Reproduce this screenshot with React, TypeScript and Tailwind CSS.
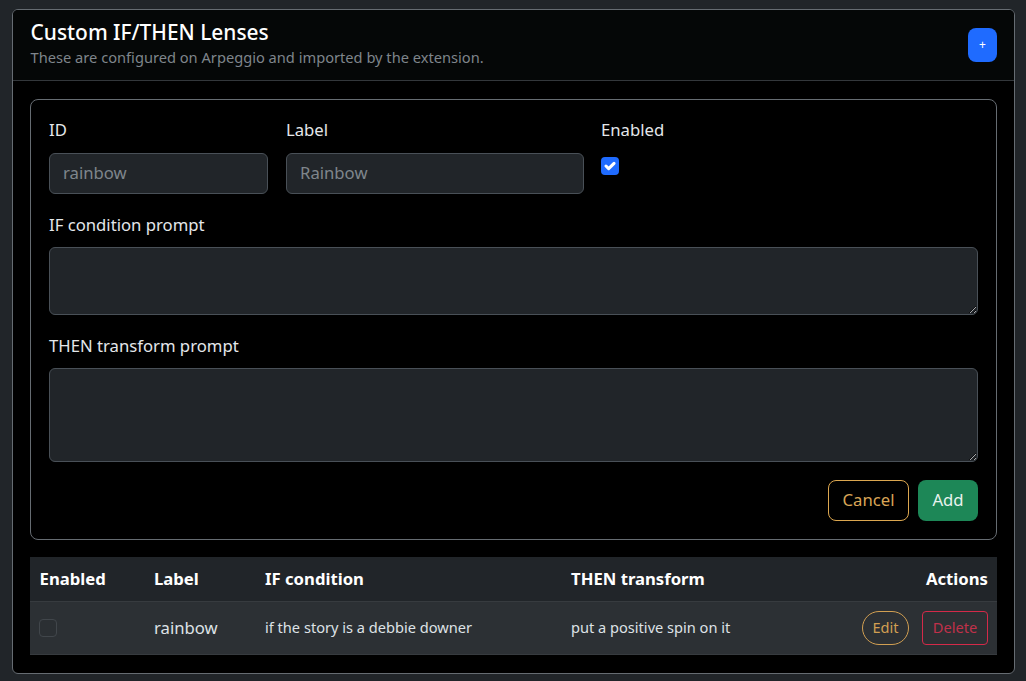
const font = "font-['Noto_Sans',sans-serif]";

function Field({ label, className, children }: { label: string; className?: string; children: React.ReactNode }) {
  return (
    <div className={className}>
      <label className="block text-[16.7px] leading-[24px] mb-[10px] text-[#e4e7ea]">{label}</label>
      {children}
    </div>
  );
}

function TextInput({ placeholder }: { placeholder: string }) {
  return (
    <input
      placeholder={placeholder}
      className="block w-full h-[41px] px-[13px] pb-[2px] rounded-[6px] border border-[#495057] bg-[#212529] text-[16.7px] text-[#dee2e6] placeholder:text-[#7f868c] outline-none"
    />
  );
}

export default function App() {
  return (
    <div className={`${font} min-h-[681px] bg-[#212529] pt-[9px] px-[12px] text-[#dee2e6]`}>
      <div className="h-[665px] w-[1003px] rounded-[6px] border border-[#666c72] bg-black overflow-hidden">
        {/* Card header */}
        <div className="h-[71px] flex items-center justify-between pl-[17.6px] pr-[17px] bg-[#050707] border-b border-[#33373b]">
          <div className="-mt-[2px]">
            <h5 className="text-[20.9px] leading-[24px] font-medium text-white">Custom IF/THEN Lenses</h5>
            <p className="mt-[3px] text-[14.65px] leading-[21px] text-[#7f858b]">These are configured on Arpeggio and imported by the extension.</p>
          </div>
          <button className="w-[29px] h-[34px] -mt-[1px] rounded-[8px] bg-[#1f6bff] text-white text-[12px] leading-none">+</button>
        </div>

        <div className="pt-[18px] px-[17px]">
          {/* Form */}
          <div className="h-[441px] rounded-[8px] border border-[#666c72] px-[18px] pt-[18px]">
            <div className="flex gap-[18px]">
              <Field label="ID" className="w-[219px] [&>label]:mb-[11px]">
                <TextInput placeholder="rainbow" />
              </Field>
              <Field label="Label" className="w-[298px] [&>label]:mb-[11px]">
                <TextInput placeholder="Rainbow" />
              </Field>
              <div className="-ml-[1px]">
                <label className="block text-[16.7px] leading-[24px] mb-[15px] text-[#e4e7ea]">Enabled</label>
                <span className="flex w-[18px] h-[18px] items-center justify-center rounded-[4px] bg-[#1f6bff]">
                  <svg viewBox="0 0 20 20" className="w-[18px] h-[18px]" fill="none">
                    <path d="m5.5 10 3 3 6-6" stroke="#fff" strokeWidth="3.4" strokeLinecap="round" strokeLinejoin="round" />
                  </svg>
                </span>
              </div>
            </div>

            <Field label="IF condition prompt" className="mt-[19px]">
              <textarea className="block w-full h-[68px] rounded-[6px] border border-[#495057] bg-[#212529] outline-none" />
            </Field>
            <Field label="THEN transform prompt" className="mt-[19px]">
              <textarea className="block w-full h-[94px] rounded-[6px] border border-[#495057] bg-[#212529] outline-none" />
            </Field>

            <div className="mt-[18px] flex justify-end gap-[9px]">
              <button className="h-[41px] w-[81px] pb-[2px] rounded-[8px] border border-[#dca750] text-[16.7px] text-[#d9a556]">Cancel</button>
              <button className="h-[41px] w-[60px] pb-[2px] rounded-[8px] bg-[#1d8757] text-[16.7px] text-[#e8f3ee]">Add</button>
            </div>
          </div>

          {/* Lenses table */}
          <table className="mt-[17px] w-[967px] table-fixed border-collapse">
            <colgroup>
              <col className="w-[114px]" />
              <col className="w-[111px]" />
              <col className="w-[306px]" />
              <col className="w-[240px]" />
              <col />
            </colgroup>
            <thead>
              <tr className="h-[44px] bg-[#212529] border-b border-[#373b3f] text-[16.7px] font-bold text-white text-left">
                <th className="px-[9.6px]">Enabled</th>
                <th className="px-[10px]">Label</th>
                <th className="px-[10px]">IF condition</th>
                <th className="px-[10px]">THEN transform</th>
                <th className="px-[9px] text-right">Actions</th>
              </tr>
            </thead>
            <tbody>
              <tr className="h-[53px] bg-[#2c3034] border-b border-[#373b3f]">
                <td className="pl-[9px] pr-[10px]">
                  <span className="block w-[18px] h-[18px] rounded-[4px] border border-[#41464b] bg-[#2b2f33]" />
                </td>
                <td className="px-[10px] text-[16.7px] text-[#dee2e6]">rainbow</td>
                <td className="px-[10px] text-[14.6px] text-[#dee2e6]">if the story is a debbie downer</td>
                <td className="px-[10px] text-[14.6px] text-[#dee2e6]">put a positive spin on it</td>
                <td className="px-[9px]">
                  <div className="flex justify-end gap-[13px]">
                    <button className="h-[34px] w-[47px] rounded-full border border-[#d19f52] text-[14.6px] text-[#d19f52]">Edit</button>
                    <button className="h-[34px] w-[66px] rounded-[4px] border border-[#d42a49] text-[14.6px] text-[#c0304a]">Delete</button>
                  </div>
                </td>
              </tr>
            </tbody>
          </table>
        </div>
      </div>
    </div>
  );
}
